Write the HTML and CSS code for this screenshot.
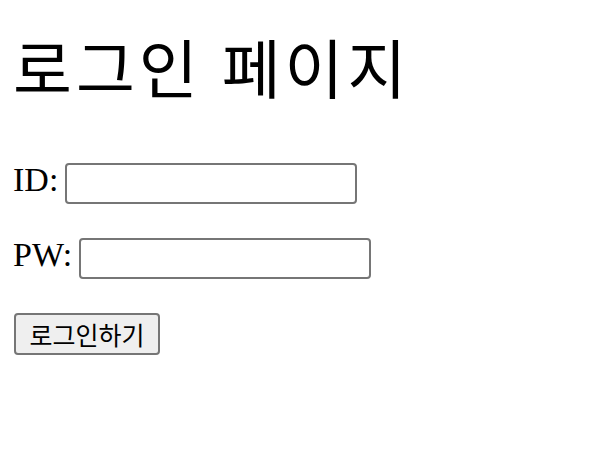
FILE: index.html
```html
<!DOCTYPE html>
<html lang="ko">
<head>
    <meta charset="UTF-8">
    <meta name="viewport" content="width=device-width, initial-scale=1.0">
    <title>로그인 페이지</title>
    <link rel="stylesheet" href="styles.css">
</head>
<body>

    <h1>로그인 페이지</h1>
    <form id="loginForm">
        <div class="row">
            <label for="userId">ID:</label>
            <input type="text" id="userId" name="userId">
        </div>
        <div class="row">
            <label for="userPw">PW:</label>
            <input type="password" id="userPw" name="userPw">
        </div>
        <button type="submit">로그인하기</button>
    </form>

</body>
</html>
```

FILE: styles.css
```css
body {
    font-family: "Liberation Serif", "Noto Sans CJK KR", serif;
    margin: 0;
    padding: 0 13px;
    color: #000;
    background-color: white;
}

h1 {
    font-size: 64px;
    font-weight: normal;
    letter-spacing: 4px;
    margin: 33px 0 53px;
    line-height: 77px;
}

.row {
    display: flex;
    align-items: center;
    gap: 7px;
    margin-bottom: 34px;
    font-size: 34px;
}

.row label {
    line-height: 34px;
    padding-bottom: 7px;
}

.row input {
    width: 292px;
    height: 41px;
    box-sizing: border-box;
    border: 2px solid #767676;
    border-radius: 4px;
    padding: 2px 4px;
    margin: 0;
    font-size: 23px;
}

button {
    font-family: "Noto Sans CJK KR", sans-serif;
    font-size: 25px;
    width: 146px;
    height: 42px;
    box-sizing: border-box;
    background-color: #efefef;
    border: 2px solid #767676;
    border-radius: 4px;
    color: #000;
    padding: 0;
    margin: 0 0 0 1px;
}
```
